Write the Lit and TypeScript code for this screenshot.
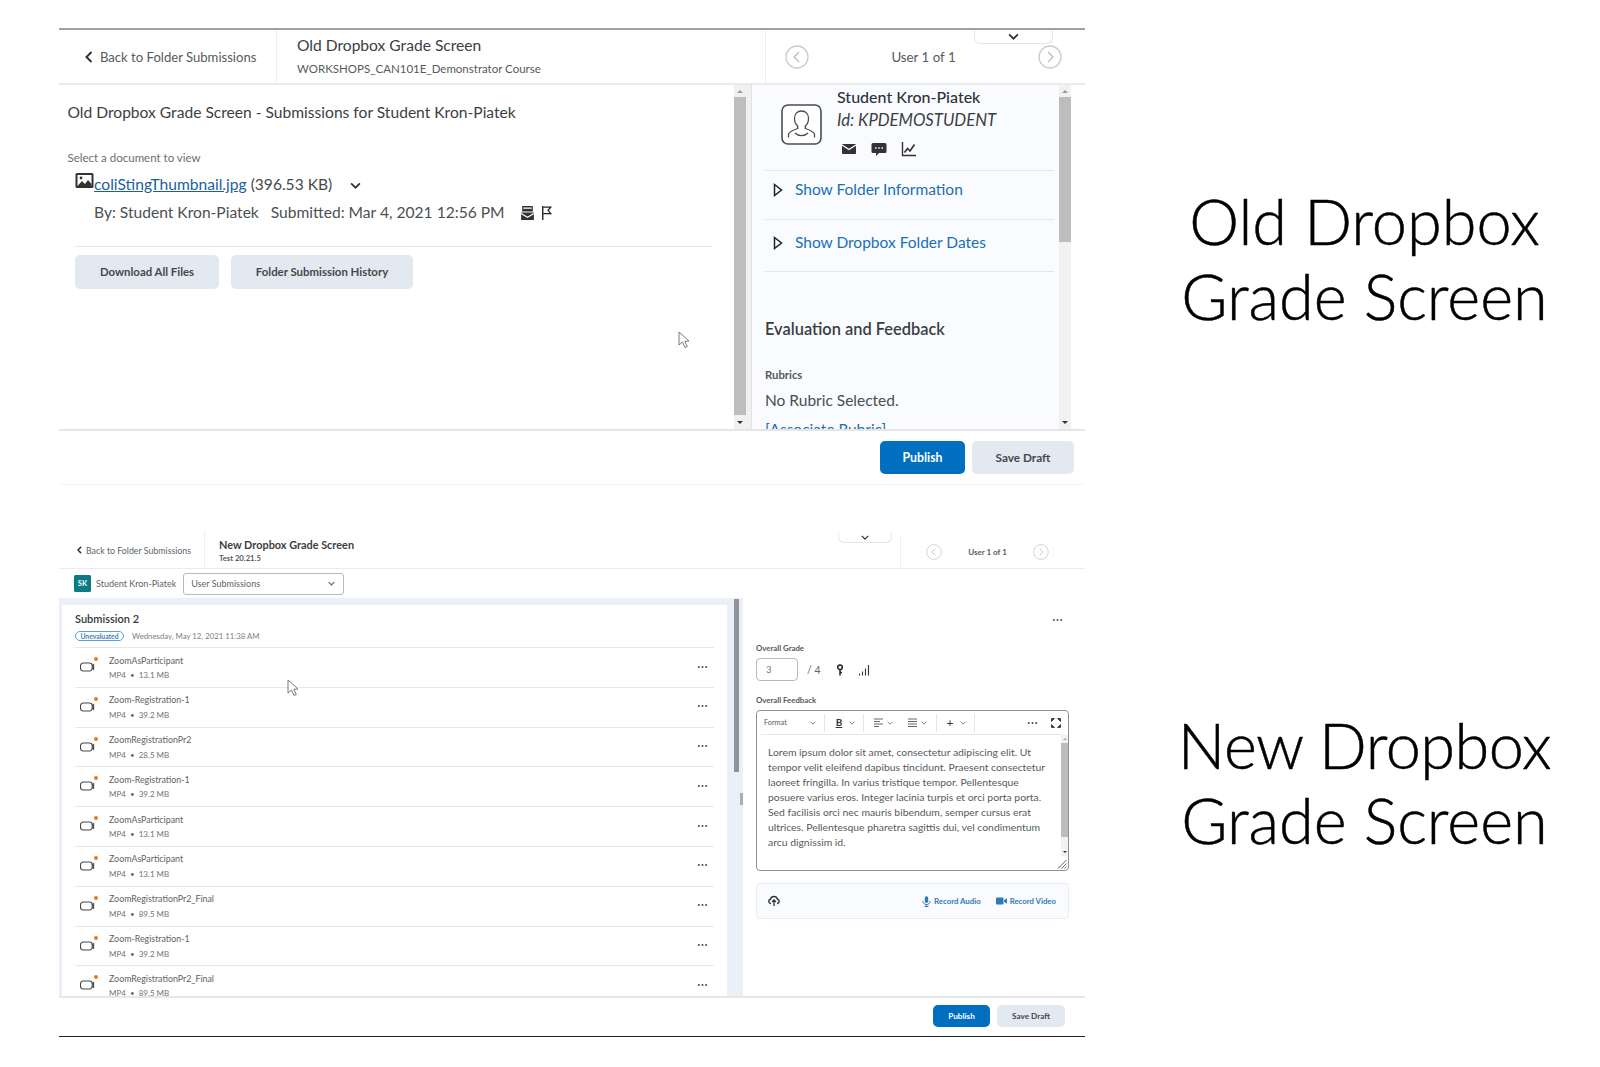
import { LitElement, html, css, svg } from "lit";
import { customElement } from "lit/decorators.js";

const chev = (cls = "") => html`<svg class="chev ${cls}" viewBox="0 0 10 6"><polyline points="1,1 5,5 9,1" fill="none" stroke="currentColor" stroke-width="1.6"/></svg>`;
const dots = (cls = "") => html`<svg class="dots ${cls}" viewBox="0 0 12 4"><circle cx="2" cy="2" r="1.1"/><circle cx="6" cy="2" r="1.1"/><circle cx="10" cy="2" r="1.1"/></svg>`;
const circleNav = (dir: "l" | "r", cls: string) => html`<svg class="${cls}" viewBox="0 0 24 24"><circle cx="12" cy="12" r="11" fill="#fff" stroke="#c9cccf" stroke-width="1.3"/><polyline points="${dir === "l" ? "14,7 9,12 14,17" : "10,7 15,12 10,17"}" fill="none" stroke="#b5b8bb" stroke-width="1.2"/></svg>`;
const cursor = svg`<path d="M1 1 L1 14 L4.5 11 L7 16.5 L9.3 15.5 L6.8 10.3 L11 10 Z" fill="#fff" stroke="#77797b" stroke-width="1"/>`;
const tri = html`<svg class="tri" viewBox="0 0 10 14"><polygon points="1.5,1.5 8.5,7 1.5,12.5" fill="none" stroke="#222" stroke-width="1.5"/></svg>`;

const files: [string, string][] = [
  ["ZoomAsParticipant", "13.1 MB"],
  ["Zoom-Registration-1", "39.2 MB"],
  ["ZoomRegistrationPr2", "28.5 MB"],
  ["Zoom-Registration-1", "39.2 MB"],
  ["ZoomAsParticipant", "13.1 MB"],
  ["ZoomAsParticipant", "13.1 MB"],
  ["ZoomRegistrationPr2_Final", "89.5 MB"],
  ["Zoom-Registration-1", "39.2 MB"],
  ["ZoomRegistrationPr2_Final", "89.5 MB"],
];

@customElement("app-root")
export class AppRoot extends LitElement {
  static styles = css`
    :host { display: block; width: 1600px; height: 1067px; background: #fff; overflow: hidden; font-family: "Lato", "Noto Sans", sans-serif; color: #45494c; }
    * { box-sizing: border-box; }
    svg { display: block; flex: none; }
    .page { display: grid; grid-template-columns: 1026px 515px; grid-template-rows: 457px 512px; row-gap: 40px; padding: 28px 0 0 59px; }
    .panel { position: relative; display: flex; flex-direction: column; overflow: hidden; }
    .caption { font-size: 63px; font-weight: 300; line-height: 75px; color: #000; -webkit-text-stroke: 0.5px #000; text-align: center; display: flex; flex-direction: column; justify-content: center; padding: 2px 0 0 44px; white-space: nowrap; }
    .tight { letter-spacing: -0.5px; }

    .old { border-top: 2px solid #9ea2a5; }
    .o-head { height: 55px; flex: none; display: flex; border-bottom: 2px solid #e9ebec; }
    .o-back { width: 218px; border-right: 1px solid #eceeef; padding-left: 26px; display: flex; align-items: center; gap: 7px; font-size: 13.1px; color: #565a5d; }
    .o-back svg { width: 8px; height: 12px; color: #333; }
    .o-title { flex: 1; padding: 5px 0 0 20px; }
    .o-title b { display: block; font-weight: 400; font-size: 15.6px; line-height: 20px; color: #3c4043; }
    .o-title span { display: block; font-size: 11.5px; line-height: 14px; margin-top: 7px; color: #565a5d; }
    .o-user { width: 320px; border-left: 1px solid #eceeef; padding: 0 23px 0 19px; display: flex; align-items: center; justify-content: space-between; font-size: 13.3px; color: #565a5d; }
    .o-user svg { width: 24px; height: 24px; }
    .tab { position: absolute; background: #fff; border: 1px solid #e3e5e7; border-top: 0; border-radius: 0 0 6px 6px; display: flex; justify-content: center; align-items: center; color: #333; }
    .o-tab { left: 915px; top: 0; width: 79px; height: 14px; }
    .o-tab svg { width: 11px; height: 7px; }
    .n-tab { left: 779px; top: 8px; width: 54px; height: 10px; }
    .n-tab svg { width: 8px; height: 5px; }

    .o-body { height: 344px; flex: none; display: flex; overflow: hidden; }
    .o-left { width: 675px; padding-left: 8px; flex: none; }
    .o-h { font-size: 15.6px; line-height: 20px; padding: 17px 0 0 0.5px; color: #3c4043; }
    .o-sel { font-size: 11.5px; line-height: 14px; margin: 29px 0 0 0.5px; color: #6a6e71; }
    .o-file { display: flex; align-items: center; margin: 9px 0 0 8px; height: 20px; font-size: 15.6px; color: #45494c; }
    .o-file svg.img { width: 19px; height: 17px; margin-top: -8px; }
    .o-file a { color: #1c5f9e; text-decoration: underline; margin-right: 4px; }
    .o-file .chev { width: 11px; height: 7px; margin: 2px 0 0 18px; color: #333; }
    .o-by { display: flex; align-items: center; margin: 8px 0 0 27px; height: 20px; font-size: 15.6px; color: #4c5053; }
    .o-by .sub { margin-left: 12px; }
    .o-by svg { width: 15px; height: 16px; margin: 1px 0 0 4px; }
    .o-by svg:first-of-type { margin-left: 15px; }
    .o-sep { height: 1px; width: 637px; background: #e6e8ea; margin: 24px 0 0 8px; }
    .o-btns { display: flex; gap: 12px; margin: 8px 0 0 8px; }
    .btn { display: flex; align-items: center; justify-content: center; border-radius: 5px; background: #e3e9f1; color: #44484b; font-weight: 700; flex: none; padding-bottom: 1px; }
    .o-btns .btn { height: 34px; font-size: 11.4px; }
    .w1 { width: 144px; } .w2 { width: 182px; }
    .sb { width: 12px; flex: none; background: #f1f1f1; display: flex; flex-direction: column; align-items: center; height: 344px; }
    .sb i { display: block; width: 0; height: 0; border-left: 3px solid transparent; border-right: 3px solid transparent; flex: none; }
    .sb i.up { border-bottom: 3px solid #9a9a9a; margin: 5px 0 4px; }
    .sb i.dn { border-top: 3px solid #333; margin: auto 0 5px; }
    .sb u { display: block; width: 100%; background: #bdbdbd; flex: none; }
    .t1 { height: 318px; } .t2 { height: 145px; }
    .gut { width: 6px; background: #f0f0f0; flex: none; border-right: 1px solid #e2e2e2; }
    .o-right { width: 307px; flex: none; background: #f9fbff; padding: 2px 5px 0 13px; overflow: hidden; height: 344px; }
    .o-user-box { height: 84px; display: flex; gap: 15px; padding-left: 16px; border-bottom: 1px solid #e4e6e8; }
    .ava { width: 41px; height: 41px; margin-top: 17px; }
    .nm { font-size: 16px; line-height: 20px; color: #2f3335; font-weight: 500; }
    .idt { font-size: 16.7px; line-height: 22px; margin-top: 2px; font-style: italic; color: #3c4043; }
    .o-ic { display: flex; gap: 14px; margin-top: 10px; padding-left: 4px; }
    .o-ic svg { width: 16px; height: 16px; }
    .show { display: flex; gap: 12px; padding: 8px 0 0 8px; border-bottom: 1px solid #e4e6e8; height: 49px; line-height: 20px; font-size: 15.5px; color: #1a6fb5; }
    .show.two { height: 52px; padding-top: 12px; }
    .tri { width: 10px; height: 14px; margin-top: 4px; }
    .ev { font-size: 16.4px; font-weight: 600; line-height: 20px; margin-top: 47px; color: #3a3e41; }
    .rub { font-size: 11.3px; font-weight: 700; line-height: 14px; margin-top: 29px; color: #55595c; }
    .nor { font-size: 15.5px; line-height: 20px; margin-top: 8px; color: #4a4e51; }
    .asg { font-size: 15.5px; line-height: 20px; margin-top: 9px; color: #1a6fb5; }
    .o-foot { height: 56px; flex: none; border-top: 2px solid #e5e5e5; border-bottom: 1px solid #f5f5f5; display: flex; justify-content: flex-end; gap: 7px; padding: 10px 11px 0 0; }
    .o-foot .btn { height: 33px; font-size: 12.3px; }
    .o-foot .sav { font-size: 11.8px; }
    .pub { background: #006fbf; color: #fff; }
    .o-foot .pub { width: 85px; } .o-foot .sav { width: 102px; }
    .curs { position: absolute; width: 13px; height: 18px; }
    .c1 { left: 619px; top: 301px; } .c2 { left: 228px; top: 154px; }

    .new { border-bottom: 1.5px solid #222; }
    .n-head { height: 44px; flex: none; display: flex; border-bottom: 1.5px solid #e9ebec; }
    .n-back { width: 146px; border-right: 1px solid #eef0f1; padding: 1px 0 0 18px; margin-top: 6px; display: flex; align-items: center; gap: 4px; font-size: 8.8px; color: #606467; }
    .n-back svg { width: 5px; height: 8px; color: #333; }
    .n-title { flex: 1; padding: 13px 0 0 14px; }
    .n-title b { display: block; font-weight: 700; font-size: 10.9px; line-height: 13px; color: #3c4043; }
    .n-title span { display: block; font-size: 7.7px; font-weight: 700; line-height: 10px; margin-top: 2px; color: #565a5d; }
    .n-user { width: 185px; border-left: 1px solid #eef0f1; margin-top: 10px; padding: 0 36px 0 25px; display: flex; align-items: center; justify-content: space-between; font-size: 8px; font-weight: 700; color: #565a5d; }
    .n-user svg { width: 16px; height: 16px; }
    .n-sub { height: 29px; flex: none; display: flex; align-items: center; padding-left: 15px; font-size: 9px; color: #606467; }
    .sk { width: 17px; height: 17px; background: #0a7a85; color: #fff; font-size: 7.5px; font-weight: 700; display: flex; align-items: center; justify-content: center; border-radius: 1.5px; margin-right: 5px; }
    .sel { width: 161px; height: 22px; border: 1px solid #b8bbbd; border-radius: 3px; margin-left: 7px; padding: 0 8px 0 7px; display: flex; align-items: center; justify-content: space-between; font-size: 9px; }
    .sel svg { width: 7px; height: 5px; }
    .n-main { height: 398px; flex: none; display: flex; background: #ebf0f8; overflow: hidden; }
    .card { width: 665px; margin: 7px 0 0 3px; flex: none; background: #fff; padding: 7px 13px 0; overflow: hidden; }
    .card h3 { margin: 0; font-size: 11px; font-weight: 600; line-height: 13px; color: #33373a; }
    .meta { display: flex; align-items: center; gap: 8px; height: 10px; margin: 6px 0 6px; font-size: 7.8px; color: #7c8083; }
    .pill { height: 10px; width: 49px; border: 1px solid #5c9fd3; border-radius: 5px; display: flex; align-items: center; justify-content: center; font-size: 6.8px; font-weight: 700; color: #3f83b8; }
    .row { height: 39.8px; border-top: 1px solid #e5e7ea; display: flex; padding-left: 5px; }
    .row .cam { width: 18px; height: 18px; margin-top: 8px; }
    .row .tx { margin-left: 11px; padding-top: 6.5px; }
    .row .n { font-size: 8.85px; line-height: 12px; color: #5e6265; }
    .row .m { font-size: 8px; line-height: 11px; margin-top: 3.5px; color: #6e7275; }
    .dots { width: 11px; height: 4px; fill: #45494c; }
    .row .dots { margin: 16.5px 6px 0 auto; }
    .gutter { width: 16px; flex: none; padding-left: 7px; display: flex; }
    .gutter .th { width: 5px; height: 173px; background: #8f9499; margin-top: 1px; flex: none; }
    .gutter .hd { width: 3px; height: 12px; background: #a9adb1; margin: 195px 0 0 1px; flex: none; }
    .rp { width: 342px; flex: none; background: #fff; padding: 18px 16px 0 13px; }
    .rp-top { display: flex; justify-content: flex-end; padding-right: 6px; height: 8px; align-items: center; }
    .lb { font-size: 7.8px; font-weight: 700; line-height: 10px; color: #55595c; }
    .lb.a { margin-top: 19px; } .lb.b { margin-top: 14px; }
    .grade { display: flex; align-items: center; margin-top: 5px; }
    .inp { width: 42px; height: 23px; border: 1px solid #b8bbbd; border-radius: 4px; padding-left: 9px; display: flex; align-items: center; font-size: 9.5px; color: #777; }
    .of { margin-left: 9px; width: 14px; font-size: 10.5px; color: #666; white-space: nowrap; }
    .key { width: 8px; height: 12px; margin-left: 15px; }
    .bars { width: 12px; height: 12px; margin-left: 14px; }
    .ed { position: relative; margin-top: 5px; height: 161px; border: 1px solid #8d9093; border-radius: 4px; overflow: hidden; }
    .tb { display: grid; height: 23px; align-items: center; justify-items: center; color: #55595c;
      grid-template-columns: 50px 12px 11px 18px 8px 14px 16px 8px 10px 16px 8px 16px 12px 14px 8px 47px 14px 10px 14px; }
    .tb .chev { width: 6px; height: 4px; color: #777; }
    .tb .fm { justify-self: start; padding-left: 7px; font-size: 7.3px; }
    .tb .s { width: 1px; height: 18px; background: #e3e5e7; }
    .tb .bd { font-size: 10px; font-weight: 700; text-decoration: underline; color: #333; line-height: 11px; }
    .tb .pl { font-size: 12px; color: #333; line-height: 12px; }
    .tb svg.i { width: 9px; height: 9px; }
    .tb svg.f { width: 10px; height: 10px; }
    .tl { height: 1px; background: #e5e7e9; margin: 0 6px 0 4px; }
    .ec { display: flex; }
    .et { flex: 1; padding: 9.5px 0 0 11px; font-size: 10.4px; line-height: 15px; color: #555a5d; white-space: nowrap; }
    .sbn { width: 7px; flex: none; height: 121px; background: #f1f1f1; display: flex; flex-direction: column; align-items: center; }
    .sbn i { display: block; width: 0; height: 0; border-left: 2px solid transparent; border-right: 2px solid transparent; flex: none; }
    .sbn i.up { border-bottom: 2px solid #aaa; margin: 3px 0 3px; }
    .sbn i.dn { border-top: 2px solid #333; margin: auto 0 3px; }
    .sbn u { display: block; width: 100%; height: 94px; background: #bdbdbd; flex: none; }
    .grip { position: absolute; right: 1px; bottom: 1px; width: 10px; height: 10px; }
    .att { margin-top: 12px; height: 36px; border: 1px solid #e8ebf0; border-radius: 4px; background: #f9fbff; display: flex; align-items: center; padding: 0 12px 0 11px; font-size: 7.8px; font-weight: 700; color: #2f7ab5; }
    .att .up { width: 12px; height: 12px; margin-right: auto; }
    .att .mic { width: 9px; height: 11px; margin-right: 3px; }
    .att .vid { width: 11px; height: 8px; margin: 0 3px 0 15px; }
    .n-foot { height: 40px; flex: none; border-top: 2px solid #e7e7e7; display: flex; justify-content: flex-end; gap: 7px; padding: 7px 20px 0 0; }
    .n-foot .btn { height: 22px; font-size: 8.2px; }
    .n-foot .pub { width: 57px; } .n-foot .sav { width: 68px; }
  `;

  private fileRow([name, size]: [string, string]) {
    return html`<div class="row">
      <svg class="cam" viewBox="0 0 18 18"><path d="M3.2 7h6.3a2.7 2.7 0 0 1 2.7 2.7v2.6a2.7 2.7 0 0 1-2.7 2.7H3.2A2.7 2.7 0 0 1 .5 12.3V9.7A2.7 2.7 0 0 1 3.2 7Z M12.2 10 L13.6 8.8 V13.2 L12.2 12" fill="none" stroke="#45494c" stroke-width="1.1"/><circle cx="16" cy="3" r="2" fill="#e8771d"/></svg>
      <div class="tx"><div class="n">${name}</div><div class="m">MP4 &nbsp;•&nbsp; ${size}</div></div>
      ${dots()}
    </div>`;
  }

  private oldPanel() {
    return html`<section class="panel old">
      <div class="o-head">
        <div class="o-back"><svg viewBox="0 0 8 12"><polyline points="6.5,1 1.5,6 6.5,11" fill="none" stroke="currentColor" stroke-width="2"/></svg>Back to Folder Submissions</div>
        <div class="o-title"><b>Old Dropbox Grade Screen</b><span>WORKSHOPS_CAN101E_Demonstrator Course</span></div>
        <div class="o-user">${circleNav("l", "")}<span>User 1 of 1</span>${circleNav("r", "")}</div>
      </div>
      <div class="tab o-tab">${chev()}</div>
      <div class="o-body">
        <div class="o-left">
          <div class="o-h">Old Dropbox Grade Screen - Submissions for Student Kron-Piatek</div>
          <div class="o-sel">Select a document to view</div>
          <div class="o-file">
            <svg class="img" viewBox="0 0 19 17"><rect x="0.5" y="1" width="18" height="15" rx="1.5" fill="#333"/><rect x="2.5" y="3" width="14" height="11" fill="#fff"/><circle cx="6" cy="6" r="1.4" fill="#333"/><path d="M2.5 14 L7 9 L10 12 L13 8 L16.5 12 V14 Z" fill="#333"/></svg>
            <a>coliStingThumbnail.jpg</a>(396.53 KB)${chev()}
          </div>
          <div class="o-by"><span>By: Student Kron-Piatek</span><span class="sub">Submitted: Mar 4, 2021 12:56 PM</span>
            <svg viewBox="0 0 14 15"><path d="M2 1h10v5H2z M1 7h12v7H1z" fill="#333"/><path d="M3 3h8 M1 8l6 3.5L13 8" stroke="#fff" stroke-width="1.1" fill="none"/></svg>
            <svg viewBox="0 0 14 15"><path d="M3.5 1v13" stroke="#222" stroke-width="1.3"/><path d="M4 2h7l-2.5 3L11 8H4" fill="none" stroke="#222" stroke-width="1.2"/></svg>
          </div>
          <div class="o-sep"></div>
          <div class="o-btns"><div class="btn w1">Download All Files</div><div class="btn w2">Folder Submission History</div></div>
        </div>
        <div class="sb"><i class="up"></i><u class="t1"></u><i class="dn"></i></div>
        <div class="gut"></div>
        <div class="o-right">
          <div class="o-user-box">
            <svg class="ava" viewBox="0 0 41 41"><rect x="1" y="1" width="39" height="39" rx="6" fill="#fff" stroke="#4a4e51" stroke-width="1.6"/><path d="M20.5 7c-4.5 0-7 3.2-7 7.5 0 3.2 1.4 6 3.2 7.6v2.4c-3.8 1.3-8.2 2.8-9.2 5.5v3.5 M20.5 7c4.5 0 7 3.2 7 7.5 0 3.2-1.4 6-3.2 7.6v2.4c3.8 1.3 8.2 2.8 9.2 5.5v3.5 M14 29c2 2 4.5 2.6 6.5 2.6S25 31 27 29" fill="none" stroke="#4a4e51" stroke-width="1.3"/></svg>
            <div>
              <div class="nm">Student Kron-Piatek</div>
              <div class="idt">Id: KPDEMOSTUDENT</div>
              <div class="o-ic">
                <svg viewBox="0 0 16 16"><rect x="1" y="3" width="14" height="10" rx="1" fill="#333"/><path d="M1 4l7 4.5L15 4" fill="none" stroke="#fff" stroke-width="1.3"/></svg>
                <svg viewBox="0 0 16 16"><path d="M2 2h12a1.5 1.5 0 0 1 1.5 1.5v7A1.5 1.5 0 0 1 14 12H8l-3 3v-3H2A1.5 1.5 0 0 1 .5 10.5v-7A1.5 1.5 0 0 1 2 2Z" fill="#333"/><path d="M4 7h1.5M7.2 7h1.5M10.5 7h1.5" stroke="#fff" stroke-width="1.3"/></svg>
                <svg viewBox="0 0 16 16"><path d="M1.5 1v13.5H15" fill="none" stroke="#333" stroke-width="1.4"/><path d="M3.5 11.5l3-4 2.5 2.5 4.5-6.5" fill="none" stroke="#333" stroke-width="1.6"/></svg>
              </div>
            </div>
          </div>
          <div class="show">${tri}<span>Show Folder Information</span></div>
          <div class="show two">${tri}<span>Show Dropbox Folder Dates</span></div>
          <div class="ev">Evaluation and Feedback</div>
          <div class="rub">Rubrics</div>
          <div class="nor">No Rubric Selected.</div>
          <div class="asg">[Associate Rubric]</div>
        </div>
        <div class="sb"><i class="up"></i><u class="t2"></u><i class="dn"></i></div>
      </div>
      <div class="o-foot"><div class="btn pub">Publish</div><div class="btn sav">Save Draft</div></div>
      <svg class="curs c1" viewBox="0 0 13 18">${cursor}</svg>
    </section>`;
  }

  private newPanel() {
    return html`<section class="panel new">
      <div class="n-head">
        <div class="n-back"><svg viewBox="0 0 8 12"><polyline points="6.5,1 1.5,6 6.5,11" fill="none" stroke="currentColor" stroke-width="2.4"/></svg>Back to Folder Submissions</div>
        <div class="n-title"><b>New Dropbox Grade Screen</b><span>Test 20.21.5</span></div>
        <div class="n-user">${circleNav("l", "")}<span>User 1 of 1</span>${circleNav("r", "")}</div>
      </div>
      <div class="tab n-tab">${chev()}</div>
      <div class="n-sub"><div class="sk">SK</div>Student Kron-Piatek<div class="sel">User Submissions${chev()}</div></div>
      <div class="n-main">
        <div class="card">
          <h3>Submission 2</h3>
          <div class="meta"><span class="pill">Unevaluated</span>Wednesday, May 12, 2021 11:38 AM</div>
          ${files.map((f) => this.fileRow(f))}
        </div>
        <div class="gutter"><div class="th"></div><div class="hd"></div></div>
        <div class="rp">
          <div class="rp-top">${dots()}</div>
          <div class="lb a">Overall Grade</div>
          <div class="grade">
            <div class="inp">3</div><span class="of">/ 4</span>
            <svg class="key" viewBox="0 0 8 12"><circle cx="4" cy="3.2" r="2.3" fill="none" stroke="#222" stroke-width="1.5"/><path d="M4 5.5V11.5M4 8.5h2" stroke="#222" stroke-width="1.5" fill="none"/></svg>
            <svg class="bars" viewBox="0 0 12 12"><path d="M1.5 9.5v2M4.5 7.5v4M7.5 4.5v7M10.5 1v10.5" stroke="#333" stroke-width="1.1"/></svg>
          </div>
          <div class="lb b">Overall Feedback</div>
          <div class="ed">
            <div class="tb">
              <span class="fm">Format</span>${chev()}<span class="s"></span>
              <span class="bd">B</span>${chev()}<span class="s"></span>
              <svg class="i" viewBox="0 0 9 9"><path d="M0 1h9M0 3.5h6M0 6h9M0 8.5h5" stroke="#555" stroke-width="0.9"/></svg>${chev()}
              <span></span>
              <svg class="i" viewBox="0 0 9 9"><path d="M0 1h9M0 3.5h9M0 6h9M0 8.5h9" stroke="#555" stroke-width="0.9"/></svg>${chev()}<span class="s"></span>
              <span class="pl">+</span>${chev()}<span class="s"></span>
              <span></span>${dots()}<span></span>
              <svg class="f" viewBox="0 0 10 10"><path d="M0.5 3.5V.5h3L.5 3.5M9.5 3.5V.5h-3l3 3M.5 6.5v3h3l-3-3M9.5 6.5v3h-3l3-3" fill="#333" stroke="#333" stroke-width=".8"/></svg>
            </div>
            <div class="tl"></div>
            <div class="ec">
              <div class="et">Lorem ipsum dolor sit amet, consectetur adipiscing elit. Ut<br>tempor velit eleifend dapibus tincidunt. Praesent consectetur<br>laoreet fringilla. In varius tristique tempor. Pellentesque<br>posuere varius eros. Integer lacinia turpis et orci porta porta.<br>Sed facilisis orci nec mauris bibendum, semper cursus erat<br>ultrices. Pellentesque pharetra sagittis dui, vel condimentum<br>arcu dignissim id.</div>
              <div class="sbn"><i class="up"></i><u></u><i class="dn"></i></div>
            </div>
            <svg class="grip" viewBox="0 0 10 10"><path d="M9.5 1L1 9.5M9.5 4.5L4.5 9.5M9.5 7.5L7.5 9.5" stroke="#555" stroke-width="0.9"/></svg>
          </div>
          <div class="att">
            <svg class="up" viewBox="0 0 12 12"><path d="M3 8.5H2.6A2.2 2.2 0 0 1 2.4 4.2 3.7 3.7 0 0 1 9.5 4.2 2.2 2.2 0 0 1 9.4 8.5H9" fill="none" stroke="#333" stroke-width="1.4"/><path d="M6 11V5M4 7l2-2 2 2" fill="none" stroke="#333" stroke-width="1.3"/></svg>
            <svg class="mic" viewBox="0 0 9 11"><rect x="2.8" y="0.3" width="3.4" height="6.6" rx="1.7" fill="#2f7ab5"/><path d="M1 5c0 2.5 1.6 3.5 3.5 3.5S8 7.5 8 5M4.5 8.5V10.500M2.500 10.500h4" fill="none" stroke="#2f7ab5" stroke-width="1"/></svg>Record Audio
            <svg class="vid" viewBox="0 0 11 8"><rect y="0.5" width="7.5" height="7" rx="1" fill="#2f7ab5"/><path d="M8 3.2L11 1.2V6.8L8 4.8Z" fill="#2f7ab5"/></svg>Record Video
          </div>
        </div>
      </div>
      <div class="n-foot"><div class="btn pub">Publish</div><div class="btn sav">Save Draft</div></div>
      <svg class="curs c2" viewBox="0 0 13 18">${cursor}</svg>
    </section>`;
  }

  render() {
    return html`<div class="page">
      ${this.oldPanel()}
      <div class="caption">Old Dropbox<br>Grade Screen</div>
      ${this.newPanel()}
      <div class="caption"><span class="tight">New Dropbox</span>Grade Screen</div>
    </div>`;
  }
}
